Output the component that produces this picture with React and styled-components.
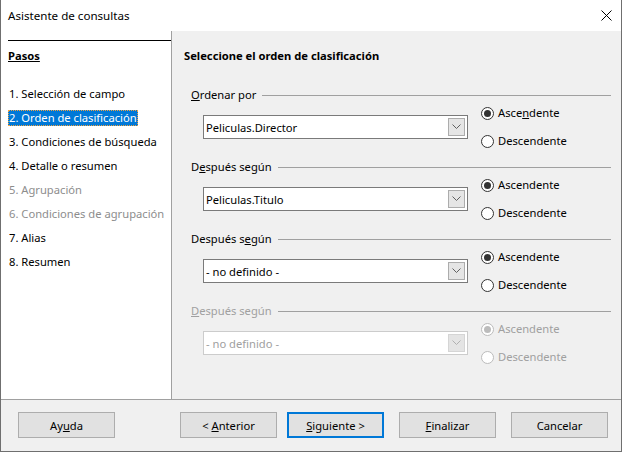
import React from 'react';
import styled, { createGlobalStyle } from 'styled-components';

const Global = createGlobalStyle`
  html, body {
    margin: 0;
    padding: 0;
    background: #2b2b2b;
  }
  body {
    font-family: "Noto Sans", "Open Sans", sans-serif;
    font-size: 11.2px;
    color: #000;
    white-space: nowrap;
  }
`;

const Window = styled.div`
  width: 620px;
  height: 451px;
  background: #fff;
  border: 1px solid #6f6f6f;
  border-top: 0;
  display: flex;
  flex-direction: column;
`;

const TitleBar = styled.div`
  height: 31px;
  display: flex;
  align-items: center;
  justify-content: space-between;
  padding: 0 9px 0 7px;
  background: #fff;
  font-size: 11.6px;
`;

const Body = styled.div`
  flex: 0 0 368px;
  display: flex;
`;

const Sidebar = styled.div`
  width: 171px;
  box-sizing: border-box;
  background: #fff;
  border-right: 1px solid #a0a0a0;
  padding-top: 9px;
  padding-left: 7px;
`;

const Rule = styled.div`
  height: 1px;
  background: #000;
`;

const SideTitle = styled.div`
  margin-top: 7px;
  font-weight: 700;
  text-decoration: underline;
  line-height: 16px;
`;

const StepList = styled.div`
  margin-top: 22px;
  display: flex;
  flex-direction: column;
  gap: 8px;
`;

const Step = styled.div`
  align-self: flex-start;
  line-height: 16px;
  padding: 0 1px;
  color: ${p => (p.disabled ? '#8d8d8d' : '#000')};
  background: ${p => (p.active ? '#0078d7' : 'transparent')};
  ${p => p.active && `color: #fff; outline: 1px dotted #f2a340; outline-offset: -1px;`}
`;

const Main = styled.div`
  flex: 1;
  background: #f0f0f0;
  padding: 17px 10px 0 12px;
  box-sizing: border-box;
`;

const Heading = styled.div`
  font-weight: 700;
  line-height: 16px;
`;

const Groups = styled.div`
  margin-top: 23px;
  margin-left: 7px;
  display: flex;
  flex-direction: column;
  gap: 10px;
`;

const Group = styled.div`
  color: ${p => (p.disabled ? '#a0a0a0' : '#000')};
`;

const Legend = styled.div`
  display: flex;
  align-items: center;
  gap: 6px;
  line-height: 16px;
  &::after {
    content: '';
    flex: 1;
    height: 1px;
    background: #a0a0a0;
  }
`;

const GroupBody = styled.div`
  margin-top: 2px;
  padding-left: 12px;
  display: flex;
  gap: 13px;
`;

const Combo = styled.div`
  margin-top: 10px;
  width: 265px;
  height: 24px;
  box-sizing: border-box;
  border: 1px solid ${p => (p.disabled ? '#cccccc' : '#7a7a7a')};
  background: #fff;
  display: flex;
  align-items: center;
  padding: 1px;
`;

const ComboText = styled.div`
  flex: 1;
  padding-left: 1px;
  color: ${p => (p.disabled ? '#a0a0a0' : '#000')};
`;

const DropButton = styled.div`
  width: 17px;
  height: 18px;
  margin-right: 1px;
  box-sizing: border-box;
  border: 1px solid ${p => (p.disabled ? '#d5d5d5' : '#acacac')};
  background: ${p => (p.disabled ? '#e4e4e4' : '#e5e5e5')};
  display: flex;
  align-items: center;
  justify-content: center;
`;

const Radios = styled.div`
  display: flex;
  flex-direction: column;
  gap: 12px;
`;

const RadioRow = styled.div`
  display: flex;
  align-items: center;
  gap: 4px;
  line-height: 16px;
  color: ${p => (p.disabled ? '#a0a0a0' : '#000')};
`;

const Circle = styled.span`
  width: 13px;
  height: 13px;
  box-sizing: border-box;
  border-radius: 50%;
  border: 1px solid ${p => (p.disabled ? '#bcbcbc' : '#333')};
  background: #fff;
  display: flex;
  align-items: center;
  justify-content: center;
  &::after {
    content: '';
    display: ${p => (p.checked ? 'block' : 'none')};
    width: 7px;
    height: 7px;
    border-radius: 50%;
    background: ${p => (p.disabled ? '#bcbcbc' : '#333')};
  }
`;

const Footer = styled.div`
  flex: 1;
  background: #f0f0f0;
  border-top: 1px solid #a0a0a0;
  display: flex;
  align-items: flex-start;
  padding: 12px 12px 0 17px;
`;

const Button = styled.div`
  width: 97px;
  height: 26px;
  box-sizing: border-box;
  margin-left: ${p => p.gap || 0}px;
  border: ${p => (p.primary ? '2px solid #0078d7' : '1px solid #adadad')};
  background: #e1e1e1;
  display: flex;
  align-items: center;
  justify-content: center;
`;

const Chevron = ({ disabled }) => (
  <svg width="9" height="6" viewBox="0 0 9 6">
    <path d="M0.5 0.5 L4.5 4.5 L8.5 0.5" fill="none" stroke={disabled ? '#b0b0b0' : '#606060'} strokeWidth="1" />
  </svg>
);

const CloseIcon = () => (
  <svg width="11" height="11" viewBox="0 0 11 11">
    <path d="M0.5 0.5 L10.5 10.5 M10.5 0.5 L0.5 10.5" stroke="#000" strokeWidth="1" />
  </svg>
);

const steps = [
  { label: '1. Selección de campo' },
  { label: '2. Orden de clasificación', active: true },
  { label: '3. Condiciones de búsqueda' },
  { label: '4. Detalle o resumen' },
  { label: '5. Agrupación', disabled: true },
  { label: '6. Condiciones de agrupación', disabled: true },
  { label: '7. Alias' },
  { label: '8. Resumen' },
];

const groups = [
  { legend: <><u>O</u>rdenar por</>, value: 'Peliculas.Director', asc: <>Asce<u>n</u>dente</> },
  { legend: <>D<u>e</u>spués según</>, value: 'Peliculas.Titulo' },
  { legend: <>Después s<u>e</u>gún</>, value: '- no definido -' },
  { legend: <><u>D</u>espués según</>, value: '- no definido -', disabled: true },
];

const SortGroup = ({ legend, value, asc, disabled }) => (
  <Group disabled={disabled}>
    <Legend>
      <span>{legend}</span>
    </Legend>
    <GroupBody>
      <Combo disabled={disabled}>
        <ComboText disabled={disabled}>{value}</ComboText>
        <DropButton disabled={disabled}>
          <Chevron disabled={disabled} />
        </DropButton>
      </Combo>
      <Radios>
        <RadioRow disabled={disabled}>
          <Circle checked disabled={disabled} />
          <span>{asc || 'Ascendente'}</span>
        </RadioRow>
        <RadioRow disabled={disabled}>
          <Circle disabled={disabled} />
          <span>Descendente</span>
        </RadioRow>
      </Radios>
    </GroupBody>
  </Group>
);

export default function App() {
  return (
    <>
      <Global />
      <Window>
        <TitleBar>
          <span>Asistente de consultas</span>
          <CloseIcon />
        </TitleBar>
        <Body>
          <Sidebar>
            <Rule />
            <SideTitle>Pasos</SideTitle>
            <StepList>
              {steps.map(s => (
                <Step key={s.label} active={s.active} disabled={s.disabled}>
                  {s.label}
                </Step>
              ))}
            </StepList>
          </Sidebar>
          <Main>
            <Heading>Seleccione el orden de clasificación</Heading>
            <Groups>
              {groups.map((g, i) => (
                <SortGroup key={i} {...g} />
              ))}
            </Groups>
          </Main>
        </Body>
        <Footer>
          <Button><span>Ay<u>u</u>da</span></Button>
          <Button gap={65}><span>&lt; <u>A</u>nterior</span></Button>
          <Button gap={10} primary><span><u>S</u>iguiente &gt;</span></Button>
          <Button gap={15}><span><u>F</u>inalizar</span></Button>
          <Button gap={15}><span>Cancelar</span></Button>
        </Footer>
      </Window>
    </>
  );
}
